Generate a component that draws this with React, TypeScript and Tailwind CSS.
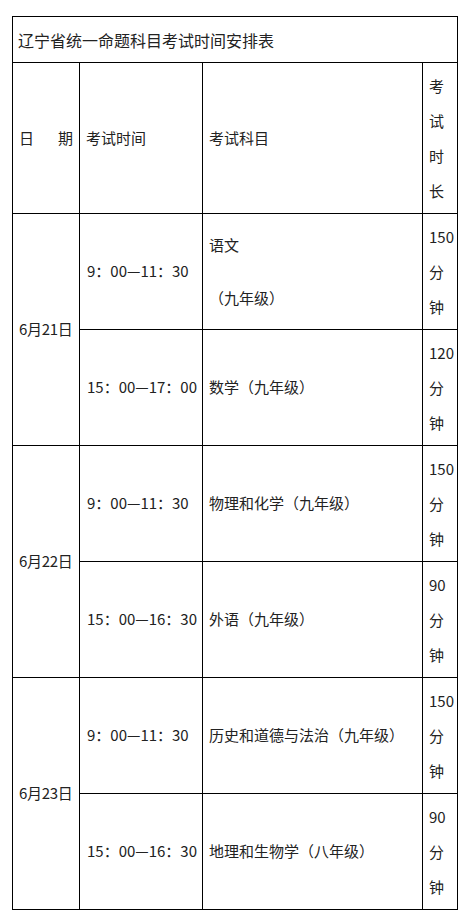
const font = { fontFamily: '"Noto Sans CJK SC", "Noto Sans", sans-serif' };

type Slot = { time: string; subject: string[]; mins: string };
type Day = { date: string; slots: Slot[] };

const days: Day[] = [
  {
    date: "6月21日",
    slots: [
      { time: "9：00—11：30", subject: ["语文", "（九年级）"], mins: "150" },
      { time: "15：00—17：00", subject: ["数学（九年级）"], mins: "120" },
    ],
  },
  {
    date: "6月22日",
    slots: [
      { time: "9：00—11：30", subject: ["物理和化学（九年级）"], mins: "150" },
      { time: "15：00—16：30", subject: ["外语（九年级）"], mins: "90" },
    ],
  },
  {
    date: "6月23日",
    slots: [
      { time: "9：00—11：30", subject: ["历史和道德与法治（九年级）"], mins: "150" },
      { time: "15：00—16：30", subject: ["地理和生物学（八年级）"], mins: "90" },
    ],
  },
];

const cell = "border border-black align-middle px-[6px] p-0";

export default function App() {
  return (
    <div className="min-h-[921px] w-[470px] bg-white pt-[16px] pl-[12px] text-[15px] text-[#222]" style={font}>
      <table className="w-[445px] table-fixed border-collapse border border-black">
        <colgroup>
          <col className="w-[67px]" />
          <col className="w-[123px]" />
          <col className="w-[220px]" />
          <col className="w-[35px]" />
        </colgroup>
        <tbody>
          <tr className="h-[46px]">
            <td colSpan={4} className={`${cell} pl-[5px] text-[16px]`}>
              辽宁省统一命题科目考试时间安排表
            </td>
          </tr>
          <tr className="h-[151px]">
            <td className={cell}>
              <div className="flex justify-between">
                <span>日</span>
                <span>期</span>
              </div>
            </td>
            <td className={cell}>考试时间</td>
            <td className={cell}>考试科目</td>
            <td className={`${cell} leading-[35px]`}>
              <div>考</div>
              <div>试</div>
              <div>时</div>
              <div>长</div>
            </td>
          </tr>
          {days.map((day) =>
            day.slots.map((slot, i) => (
              <tr key={day.date + i} className="h-[116px]">
                {i === 0 && (
                  <td rowSpan={2} className={`${cell} whitespace-nowrap pr-0 tracking-[-0.3px]`}>
                    {day.date}
                  </td>
                )}
                <td className={`${cell} whitespace-nowrap pl-[7px]`}>{slot.time}</td>
                <td className={cell}>
                  <div className="flex flex-col gap-[30px]">
                    {slot.subject.map((s) => (
                      <div key={s}>{s}</div>
                    ))}
                  </div>
                </td>
                <td className={`${cell} leading-[35px]`}>
                  <div>{slot.mins}</div>
                  <div>分</div>
                  <div>钟</div>
                </td>
              </tr>
            ))
          )}
        </tbody>
      </table>
    </div>
  );
}
